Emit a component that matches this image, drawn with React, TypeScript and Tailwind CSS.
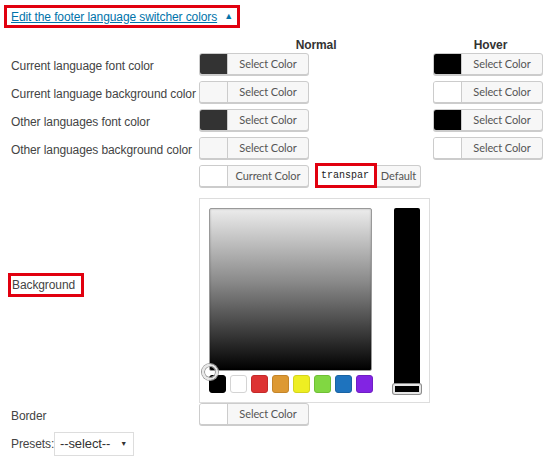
import React from 'react';

type ColorButtonProps = {
  swatch: string;
  label?: string;
  width?: string;
};

// WP-style color picker trigger: swatch on the left, caption on the right
function ColorButton({ swatch, label = 'Select Color', width = 'w-[110px]' }: ColorButtonProps) {
  return (
    <div
      className={`${width} h-[22px] flex rounded-[3px] border border-[#cccccc] bg-[#f7f7f7] shadow-[0_1px_0_#cccccc] overflow-hidden`}
    >
      <span className="w-[28px] h-full border-r border-[#cccccc]" style={{ backgroundColor: swatch }} />
      <span className="flex-1 flex items-center justify-center font-['Lato',sans-serif] text-[11px] text-[#555555]">
        {label}
      </span>
    </div>
  );
}

const rows = [
  { label: 'Current language font color', normal: '#333333', hover: '#000000' },
  { label: 'Current language background color', normal: '#f7f7f7', hover: '#ffffff' },
  { label: 'Other languages font color', normal: '#333333', hover: '#000000' },
  { label: 'Other languages background color', normal: '#f7f7f7', hover: '#ffffff' },
];

const palette = [
  { bg: '#000000', border: '#000000' },
  { bg: '#ffffff', border: '#d4d4d4' },
  { bg: '#dd3333', border: '#c42a2a' },
  { bg: '#dd9933', border: '#c4852a' },
  { bg: '#eeee22', border: '#d4d41e' },
  { bg: '#81d742', border: '#6fbf36' },
  { bg: '#1e73be', border: '#1a63a3' },
  { bg: '#8224e3', border: '#701fc4' },
];

function IrisPicker() {
  return (
    <div className="w-[231px] h-[205px] border border-[#dddddd] bg-white pt-[9px] pl-[9px] flex">
      <div className="flex flex-col">
        <div className="relative w-[163px] h-[163px] rounded-[2px] border border-[#999999] bg-[linear-gradient(to_bottom,#ececec,#8a8a8a_45%,#000000)] shadow-[inset_0_0_2px_rgba(0,0,0,0.3)]">
          <span className="absolute left-[-8px] top-[155px] w-[16px] h-[16px] rounded-full border-[2px] border-[#e8e8e8] shadow-[0_0_0_1px_#9a9a9a,inset_0_0_0_1px_#9a9a9a]" />
        </div>
        <div className="flex gap-[4px] mt-[4px]">
          {palette.map((c) => (
            <span
              key={c.bg}
              className="w-[17px] h-[18px] rounded-[3px] border"
              style={{ backgroundColor: c.bg, borderColor: c.border }}
            />
          ))}
        </div>
      </div>
      <div className="relative ml-[21px] w-[26px] h-[186px]">
        <div className="w-full h-[177px] rounded-[2px] bg-black" />
        <span className="absolute left-[-1px] top-[176px] w-[28px] h-[10px] rounded-[2px] border-[2px] border-[#e6e6e6] bg-black shadow-[0_0_0_1px_#8c8c8c]" />
      </div>
    </div>
  );
}

export default function App() {
  return (
    <div className="w-[548px] h-[462px] bg-white font-['Liberation_Sans',Arial,sans-serif] text-[12px] tracking-[-0.1px] text-[#444444] pt-[5px] pl-[4px]">
      <div className="w-[236px] h-[23px] border-[3px] border-[#e1000f] pl-[4px] flex items-center whitespace-nowrap">
        <a className="text-[#0073aa] underline leading-4">Edit the footer language switcher colors</a>
        <span className="ml-[7px] text-[9px] text-[#0073aa] leading-none">▲</span>
      </div>

      <div className="pl-[7px]">
        <div className="flex h-[16px] mt-[9px] font-bold text-[#333333] leading-4">
          <div className="w-[188px]" />
          <div className="w-[234px] text-center">Normal</div>
          <div className="w-[115px] text-center">Hover</div>
        </div>

        {rows.map((r) => (
          <div key={r.label} className="flex h-[28px]">
            <div className="w-[188px] pt-[5px] leading-4 whitespace-nowrap">{r.label}</div>
            <div className="w-[234px]">
              <ColorButton swatch={r.normal} />
            </div>
            <ColorButton swatch={r.hover} />
          </div>
        ))}

        <div className="flex h-[28px]">
          <div className="w-[188px]" />
          <ColorButton swatch="#ffffff" label="Current Color" />
          <div className="ml-[6px] -mt-[2px] w-[62px] h-[25px] border-[3px] border-[#e1000f] bg-white flex items-center pl-[3px] overflow-hidden font-['Liberation_Mono',monospace] tracking-normal text-[10px] text-[#222222]">
            transpar
          </div>
          <div className="w-[44px] h-[22px] rounded-r-[3px] border border-l-0 border-[#cccccc] bg-[#f7f7f7] shadow-[0_1px_0_#cccccc] flex items-center justify-center font-['Lato',sans-serif] text-[11px] text-[#555555]">
            Default
          </div>
        </div>

        <div className="flex mt-[5px]">
          <div className="w-[188px] pt-[75px]">
            <span className="-ml-[3px] inline-block h-[24px] border-[3px] border-[#e1000f] pl-[1px] pr-[6px] leading-[18px]">
              Background
            </span>
          </div>
          <IrisPicker />
        </div>

        <div className="flex h-[29px]">
          <div className="w-[188px] pt-[5px] leading-4">Border</div>
          <ColorButton swatch="#ffffff" />
        </div>

        <div className="flex items-center h-[24px]">
          <span className="w-[43px] leading-4">Presets:</span>
          <div className="w-[80px] h-[24px] border border-[#dddddd] flex items-center pl-[5px] pr-[6px] justify-between">
            <span className="text-[13px] text-[#333333]">--select--</span>
            <span className="text-[7px] text-[#333333]">▼</span>
          </div>
        </div>
      </div>
    </div>
  );
}
